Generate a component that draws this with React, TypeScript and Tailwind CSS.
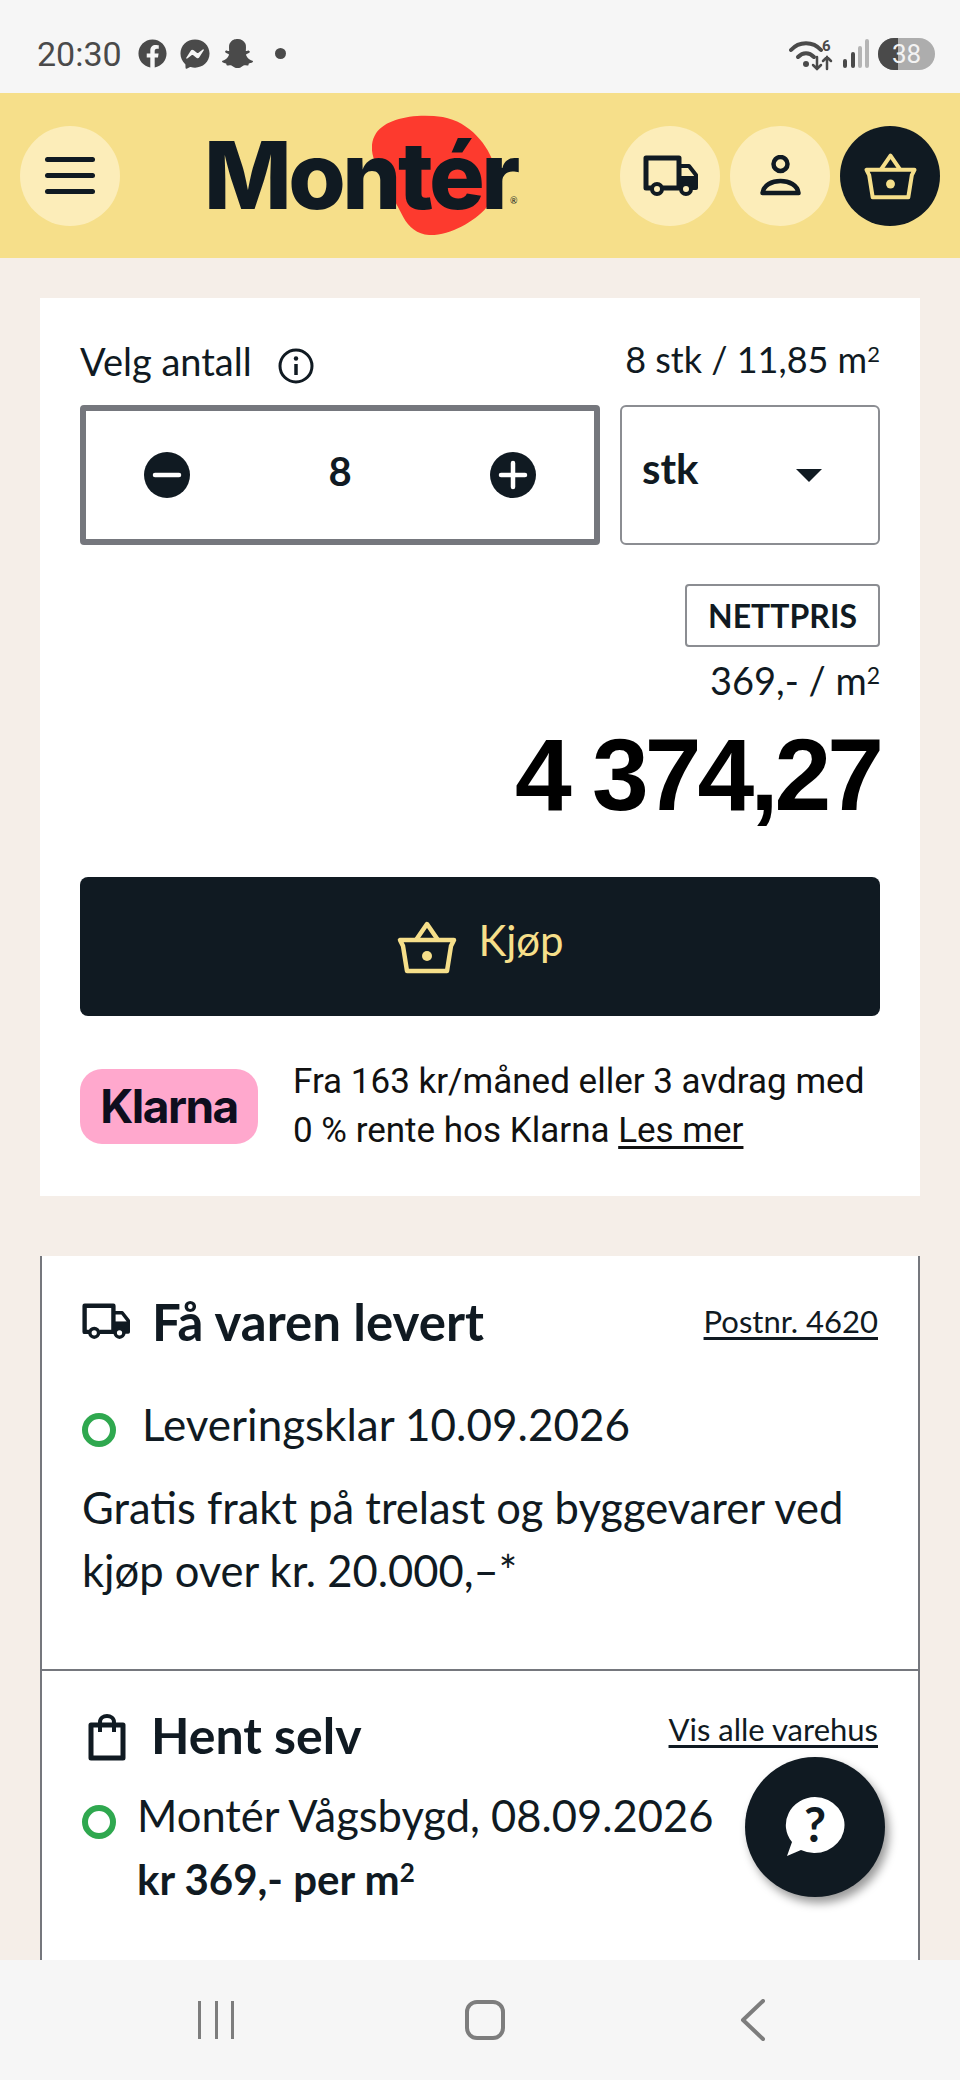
import { FaFacebook, FaFacebookMessenger, FaSnapchatGhost } from 'react-icons/fa'

const body = "font-['Lato','Noto_Sans',sans-serif]"

function Truck({ className, wheel }: { className: string; wheel: string }) {
  return (
    <svg viewBox="0 0 55 41" className={className} fill="none" stroke="currentColor" strokeWidth="5" strokeLinejoin="round">
      <path d="M8 33H3V3h33v30H20" />
      <path d="M36 11h10l7 9v13h-4" strokeWidth="4" />
      <path d="M36 21h17v12H36z" fill="currentColor" stroke="none" />
      <circle cx="14" cy="34" r="5" fill={wheel} strokeWidth="4" />
      <circle cx="43" cy="34" r="5" fill={wheel} strokeWidth="4" />
    </svg>
  )
}

function Basket({ className }: { className: string }) {
  return (
    <svg viewBox="0 0 60 54" className={className} fill="none" stroke="currentColor" strokeWidth="4.5" strokeLinejoin="round">
      <path d="M19 20 30 4l11 16" />
      <path d="M3 20h54l-3 6-4 25H10L6 26z" />
      <circle cx="30" cy="36" r="5" fill="currentColor" stroke="none" />
    </svg>
  )
}

function Person({ className }: { className: string }) {
  return (
    <svg viewBox="0 0 41 41" className={className} fill="none" stroke="currentColor" strokeWidth="4.5">
      <circle cx="20.5" cy="9" r="7" />
      <path d="M2.5 38c2-16 34-16 36 0z" strokeLinejoin="round" />
    </svg>
  )
}

function Ring({ className }: { className: string }) {
  return <span className={`block h-[34px] w-[34px] shrink-0 rounded-full border-[6px] border-[#2fa84f] ${className}`} />
}

function RoundButton({ dark, children }: { dark?: boolean; children: React.ReactNode }) {
  return (
    <div className={dark ? 'flex h-[100px] w-[100px] items-center justify-center rounded-full bg-[#101a22] text-[#f6df8a]' : 'flex h-[100px] w-[100px] items-center justify-center rounded-full bg-[#fcedb9] text-[#101a22]'}>
      {children}
    </div>
  )
}

export default function App() {
  return (
    <div className={`relative flex h-[2080px] w-[960px] flex-col overflow-hidden bg-[#f5eee8] text-[#101a22] ${body}`}>
      <div className="flex h-[93px] items-center justify-between bg-[#f6f6f6] pl-[37px] pr-[25px] pt-[14px] text-[#4a4a4a]">
        <div className="flex items-center">
          <span className="font-['Roboto',sans-serif] text-[34px] leading-none">20:30</span>
          <FaFacebook className="ml-[16px] h-[29px] w-[29px]" />
          <FaFacebookMessenger className="ml-[13px] h-[30px] w-[30px]" />
          <FaSnapchatGhost className="ml-[12px] h-[31px] w-[31px]" />
          <span className="ml-[22px] h-[11px] w-[11px] rounded-full bg-[#4a4a4a]" />
        </div>
        <div className="flex items-center">
          <svg viewBox="0 0 44 34" className="h-[34px] w-[44px]" fill="none" stroke="currentColor" strokeWidth="4" strokeLinecap="round">
            <path d="M2 13C10 4 24 4 32 13" />
            <path d="M9 20c5-5 11-5 16 0" />
            <circle cx="17" cy="27" r="3" fill="currentColor" stroke="none" />
            <path d="M28 20v12M24 28l4 4 4-4M38 32V20M34 24l4-4 4 4" strokeWidth="2.5" />
            <text x="33" y="14" fontSize="15" fontWeight="700" fill="currentColor" stroke="none" fontFamily="Roboto">6</text>
          </svg>
          <svg viewBox="0 0 28 30" className="ml-[9px] h-[30px] w-[28px]" strokeWidth="4" strokeLinecap="round">
            <path d="M3 22v5M11 15v12" stroke="#4a4a4a" />
            <path d="M18 9v18M25 2v25" stroke="#b5b5b5" />
          </svg>
          <div className="relative ml-[8px] flex h-[32px] w-[57px] items-center justify-center overflow-hidden rounded-full bg-[#adadad] font-['Roboto',sans-serif] text-[26px] leading-none text-[#f3f3f3]">
            <span className="absolute inset-y-0 left-0 w-[20px] bg-[#4a4a4a]" />
            <span className="relative">38</span>
          </div>
        </div>
      </div>

      <header className="flex h-[165px] items-center bg-[#f6df8a] pl-[20px] pr-[20px]">
        <RoundButton>
          <div className="flex w-[50px] flex-col gap-[11px]">
            <span className="h-[5px] rounded-full bg-[#101a22]" />
            <span className="h-[5px] rounded-full bg-[#101a22]" />
            <span className="h-[5px] rounded-full bg-[#101a22]" />
          </div>
        </RoundButton>
        <div className="relative ml-[84px] flex h-[165px] w-[316px] items-center">
          <svg viewBox="0 0 122 120" preserveAspectRatio="none" className="absolute left-[168px] top-[22px] h-[120px] w-[127px]">
            <path d="M4 18C14 3 42-2 68 2c26 5 44 28 50 50 3 14-2 32-6 38-10 14-32 28-52 30-14 1-24-6-30-18C22 86 12 66 4 50-1 38-2 28 4 18z" fill="#fd3a2e" />
          </svg>
          <span className="relative font-['Inter',sans-serif] text-[93px] font-extrabold leading-none tracking-[-3.5px] text-[#101a22]">Montér</span>
          <span className="absolute left-[306px] top-[103px] text-[9px] leading-none text-[#101a22]">®</span>
        </div>
        <div className="ml-auto flex gap-[10px]">
          <RoundButton>
            <Truck className="h-[41px] w-[55px]" wheel="#fcedb9" />
          </RoundButton>
          <RoundButton>
            <Person className="h-[41px] w-[41px]" />
          </RoundButton>
          <RoundButton dark>
            <Basket className="h-[48px] w-[55px]" />
          </RoundButton>
        </div>
      </header>

      <main className="flex-1 overflow-hidden px-[40px] pt-[40px]">
        <section className="h-[898px] bg-white px-[40px] pt-[40px]">
          <div className="flex h-[55px] items-center justify-between">
            <div className="flex items-center text-[38px]">
              <span className="mt-[-8px]">Velg antall</span>
              <svg viewBox="0 0 36 36" className="ml-[26px] h-[36px] w-[36px]" fill="none" stroke="currentColor" strokeWidth="3">
                <circle cx="18" cy="18" r="16" />
                <path d="M18 16v11" strokeWidth="3.5" />
                <circle cx="18" cy="10.5" r="2.2" fill="currentColor" stroke="none" />
              </svg>
            </div>
            <span className="mt-[-14px] text-[36px]">8 stk / 11,85 m<sup className="text-[22px]">2</sup></span>
          </div>

          <div className="mt-[12px] flex gap-[20px]">
            <div className="flex h-[140px] w-[520px] items-center justify-between rounded-[4px] border-[6px] border-[#75777d] px-[58px]">
              <svg viewBox="0 0 46 46" className="h-[46px] w-[46px]">
                <circle cx="23" cy="23" r="23" fill="#101a22" />
                <path d="M11 23h24" stroke="#fff" strokeWidth="4.5" strokeLinecap="round" />
              </svg>
              <span className="mt-[-9px] text-[40px] font-bold leading-none">8</span>
              <svg viewBox="0 0 46 46" className="h-[46px] w-[46px]">
                <circle cx="23" cy="23" r="23" fill="#101a22" />
                <path d="M11 23h24M23 11v24" stroke="#fff" strokeWidth="4.5" strokeLinecap="round" />
              </svg>
            </div>
            <div className="flex h-[140px] w-[260px] items-start justify-between rounded-[6px] border-2 border-[#8b8d92] pl-[20px] pr-[56px] pt-[40px]">
              <span className="text-[42px] font-bold leading-none">stk</span>
              <span className="mt-[22px] h-0 w-0 border-x-[13px] border-t-[13px] border-x-transparent border-t-[#101a22]" />
            </div>
          </div>

          <div className="mt-[39px] flex flex-col items-end">
            <div className="flex h-[63px] w-[195px] items-center justify-center rounded-[4px] border-2 border-[#8b8d92] text-[32px] font-bold">NETTPRIS</div>
            <div className="mt-[8px] text-[38px] leading-[50px]">369,- / m<sup className="text-[23px]">2</sup></div>
            <div className="mt-[16px] font-['Liberation_Sans',sans-serif] text-[102px] font-bold leading-[108px] tracking-[-4px] text-black">4 374,27</div>
          </div>

          <button className="mt-[48px] flex h-[139px] w-full items-center justify-center gap-[20px] rounded-[8px] bg-[#101a22] text-[#f6df8a]">
            <Basket className="h-[54px] w-[62px]" />
            <span className="mt-[-12px] text-[42px]">Kjøp</span>
          </button>

          <div className="mt-[41px] flex items-center gap-[35px]">
            <div className="flex h-[75px] w-[178px] items-center justify-center rounded-[22px] bg-[#ffa8cd] font-['Inter',sans-serif] text-[46px] font-bold tracking-[-1.5px] text-[#0e0e1e]">Klarna</div>
            <p className="font-['Roboto',sans-serif] text-[35px] leading-[49px] text-[#111]">
              Fra 163 kr/måned eller 3 avdrag med
              <br />0 % rente hos Klarna <span className="underline underline-offset-4">Les mer</span>
            </p>
          </div>
        </section>

        <section className="mt-[60px] h-[720px] border-x-2 border-[#75777d] bg-white">
          <div className="h-[415px] border-b-2 border-[#75777d] px-[40px]">
            <div className="flex h-[130px] items-center">
              <Truck className="h-[36px] w-[48px]" wheel="#fff" />
              <h2 className="ml-[22px] text-[51px] font-bold leading-none">Få varen levert</h2>
              <a className="ml-auto text-[31px] underline underline-offset-4">Postnr. 4620</a>
            </div>
            <div className="mt-[13px] flex items-center">
              <Ring className="mt-[12px]" />
              <span className="ml-[26px] text-[44px] leading-[50px]">Leveringsklar 10.09.2026</span>
            </div>
            <p className="mt-[27px] text-[43.5px] leading-[63px]">
              Gratis frakt på trelast og byggevarer ved
              <br />kjøp over kr. 20.000,–*
            </p>
          </div>
          <div className="px-[40px]">
            <div className="flex h-[128px] items-center">
              <svg viewBox="0 0 38 48" className="ml-[6px] mt-[4px] h-[48px] w-[38px]" fill="none" stroke="#101a22" strokeWidth="5" strokeLinejoin="round">
                <path d="M3 12h32v33H3z" />
                <path d="M12 19V9c0-8 14-8 14 0v10" strokeWidth="4" />
              </svg>
              <h2 className="ml-[25px] text-[50px] font-bold leading-none">Hent selv</h2>
              <a className="mb-[12px] ml-auto text-[31px] underline underline-offset-4">Vis alle varehus</a>
            </div>
            <div className="mt-[-9px] flex items-center">
              <Ring className="mt-[14px]" />
              <span className="ml-[21px] text-[43.5px] leading-[50px]">Montér Vågsbygd, 08.09.2026</span>
            </div>
            <p className="ml-[55px] mt-[14px] text-[42px] font-bold leading-[50px]">kr 369,- per m<sup className="text-[26px]">2</sup></p>
          </div>
        </section>
      </main>

      <nav className="flex h-[120px] shrink-0 items-center bg-[#f6f6f6] text-[#7d7d7d]">
        <div className="ml-[198px] flex h-[38px] w-[36px] justify-between">
          <span className="w-[3px] bg-[#7d7d7d]" />
          <span className="w-[3px] bg-[#7d7d7d]" />
          <span className="w-[3px] bg-[#7d7d7d]" />
        </div>
        <span className="ml-[231px] h-[40px] w-[40px] rounded-[12px] border-[4px] border-[#7d7d7d]" />
        <svg viewBox="0 0 26 42" className="ml-[235px] h-[42px] w-[26px]" fill="none" stroke="currentColor" strokeWidth="4" strokeLinecap="round" strokeLinejoin="round">
          <path d="M23 2 3 21l20 19" />
        </svg>
      </nav>

      <button className="absolute left-[745px] top-[1757px] flex h-[140px] w-[140px] items-center justify-center rounded-full bg-[#101a22] shadow-[4px_6px_10px_rgba(0,0,0,0.4)]">
        <svg viewBox="0 0 60 60" className="h-[60px] w-[60px]">
          <path d="M30 0a30 28 0 1 1-14 53L2 59l5-14A30 28 0 0 1 30 0z" fill="#fff" />
          <text x="30" y="45" textAnchor="middle" fontSize="48" fontWeight="700" fill="#101a22" fontFamily="Lato">?</text>
        </svg>
      </button>
    </div>
  )
}
